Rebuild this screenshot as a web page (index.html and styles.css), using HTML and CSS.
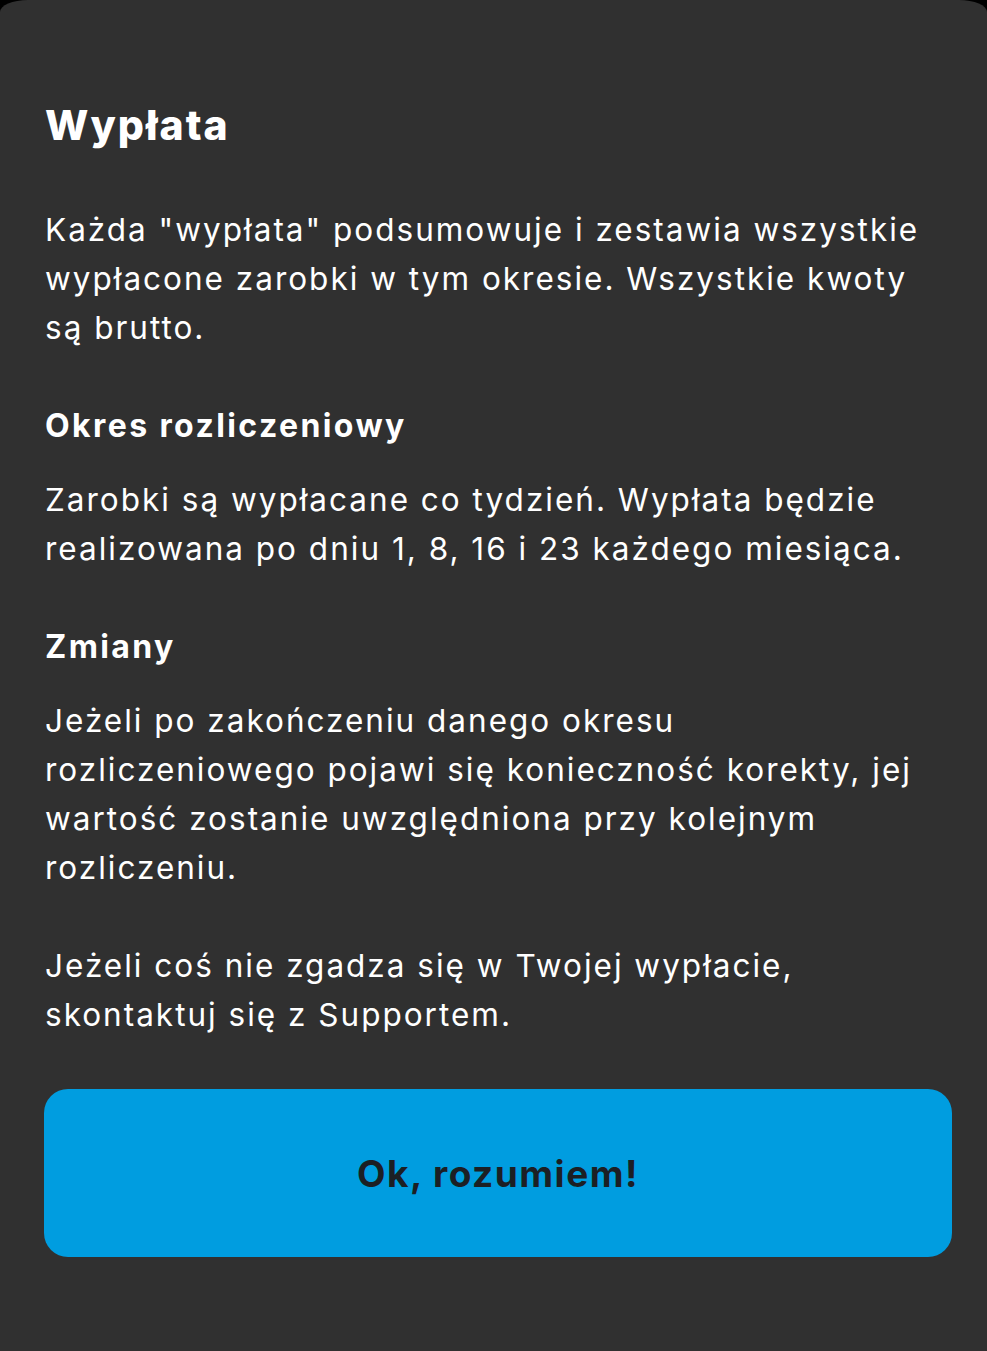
FILE: index.html
```html
<!DOCTYPE html>
<html lang="pl">
<head>
<meta charset="utf-8">
<link rel="stylesheet" href="styles.css">
</head>
<body>
<div class="sheet">
  <h1 class="title">Wypłata</h1>
  <p class="text">Każda "wypłata" podsumowuje i zestawia wszystkie wypłacone zarobki w tym okresie. Wszystkie kwoty są brutto.</p>
  <h2 class="heading">Okres rozliczeniowy</h2>
  <p class="text">Zarobki są wypłacane co tydzień. Wypłata będzie realizowana po dniu 1, 8, 16 i 23 każdego miesiąca.</p>
  <h2 class="heading">Zmiany</h2>
  <p class="text">Jeżeli po zakończeniu danego okresu rozliczeniowego pojawi się konieczność korekty, jej wartość zostanie uwzględniona przy kolejnym rozliczeniu.</p>
  <p class="text">Jeżeli coś nie zgadza się w Twojej wypłacie, skontaktuj się z Supportem.</p>
  <button class="ok">Ok, rozumiem!</button>
</div>
</body>
</html>
```
FILE: styles.css
```css
html, body {
  margin: 0;
  padding: 0;
  background: #000;
  height: 100%;
}
.sheet {
  background: #303030;
  min-height: 1351px;
  box-sizing: border-box;
  padding: 97px 35px 0 44px;
  border-top-left-radius: 28px 12px;
  border-top-right-radius: 28px 12px;
  font-family: Inter, "Noto Sans", sans-serif;
  color: #fff;
  display: flex;
  flex-direction: column;
}
.title {
  margin: 0 0 52px 1px;
  font-size: 41px;
  line-height: 56px;
  font-weight: 800;
  letter-spacing: 2px;
}
.text {
  margin: 0 0 49px 1px;
  font-size: 31.5px;
  line-height: 49px;
  font-weight: 400;
  letter-spacing: 2px;
}
.heading {
  margin: 0 0 25px 1px;
  font-size: 32px;
  line-height: 49px;
  font-weight: 700;
  letter-spacing: 2.4px;
}
.ok {
  margin-top: 1px;
  height: 168px;
  width: 908px;
  border: none;
  border-radius: 24px;
  background: #009de0;
  color: #1c1f24;
  font-family: Inter, "Noto Sans", sans-serif;
  font-size: 37px;
  font-weight: 700;
  letter-spacing: 1.5px;
  padding: 0;
}
```
